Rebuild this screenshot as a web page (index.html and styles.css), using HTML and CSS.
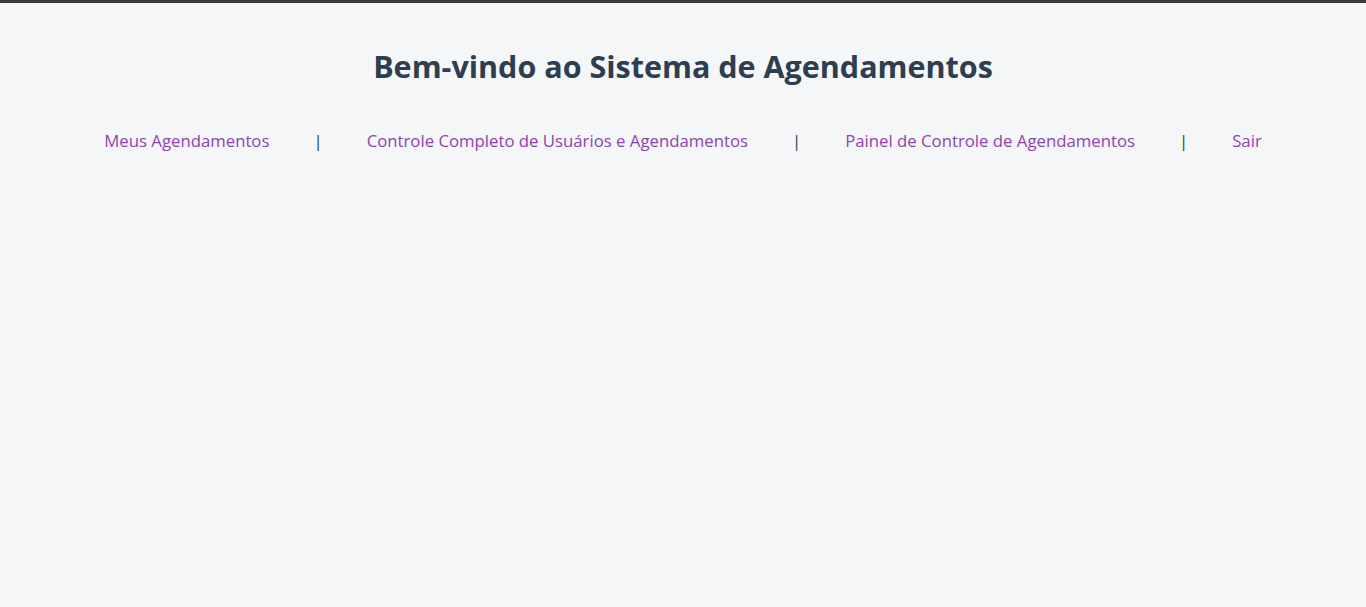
FILE: index.html
```html
<!DOCTYPE html>
<html lang="pt-BR">
<head>
<meta charset="utf-8">
<title>Sistema de Agendamentos</title>
<link rel="stylesheet" href="styles.css">
</head>
<body>
<header class="top">
  <h1 class="title">Bem-vindo ao Sistema de Agendamentos</h1>
  <nav class="nav">
    <a href="#" class="nav-link">Meus Agendamentos</a>
    <span class="sep">|</span>
    <a href="#" class="nav-link">Controle Completo de Usuários e Agendamentos</a>
    <span class="sep">|</span>
    <a href="#" class="nav-link">Painel de Controle de Agendamentos</a>
    <span class="sep">|</span>
    <a href="#" class="nav-link">Sair</a>
  </nav>
</header>
</body>
</html>
```
FILE: styles.css
```css
html, body {
  margin: 0;
  padding: 0;
}
body {
  background: #f4f6f8;
  border-top: 3px solid #3b3b3d;
  font-family: "Open Sans", "Noto Sans", sans-serif;
  color: #2c3e50;
  min-height: 604px;
}
.top {
  display: flex;
  flex-direction: column;
  align-items: center;
  padding-top: 42px;
}
.title {
  margin: 0;
  font-size: 30.5px;
  font-weight: 700;
  line-height: 42px;
  color: #2c3e50;
}
.nav {
  display: flex;
  align-items: center;
  justify-content: center;
  gap: 44px;
  margin-top: 42px;
  font-size: 16.75px;
  line-height: 24px;
}
.nav-link {
  color: #8e44ad;
  text-decoration: none;
}
.sep {
  color: #2c3e50;
}
```
